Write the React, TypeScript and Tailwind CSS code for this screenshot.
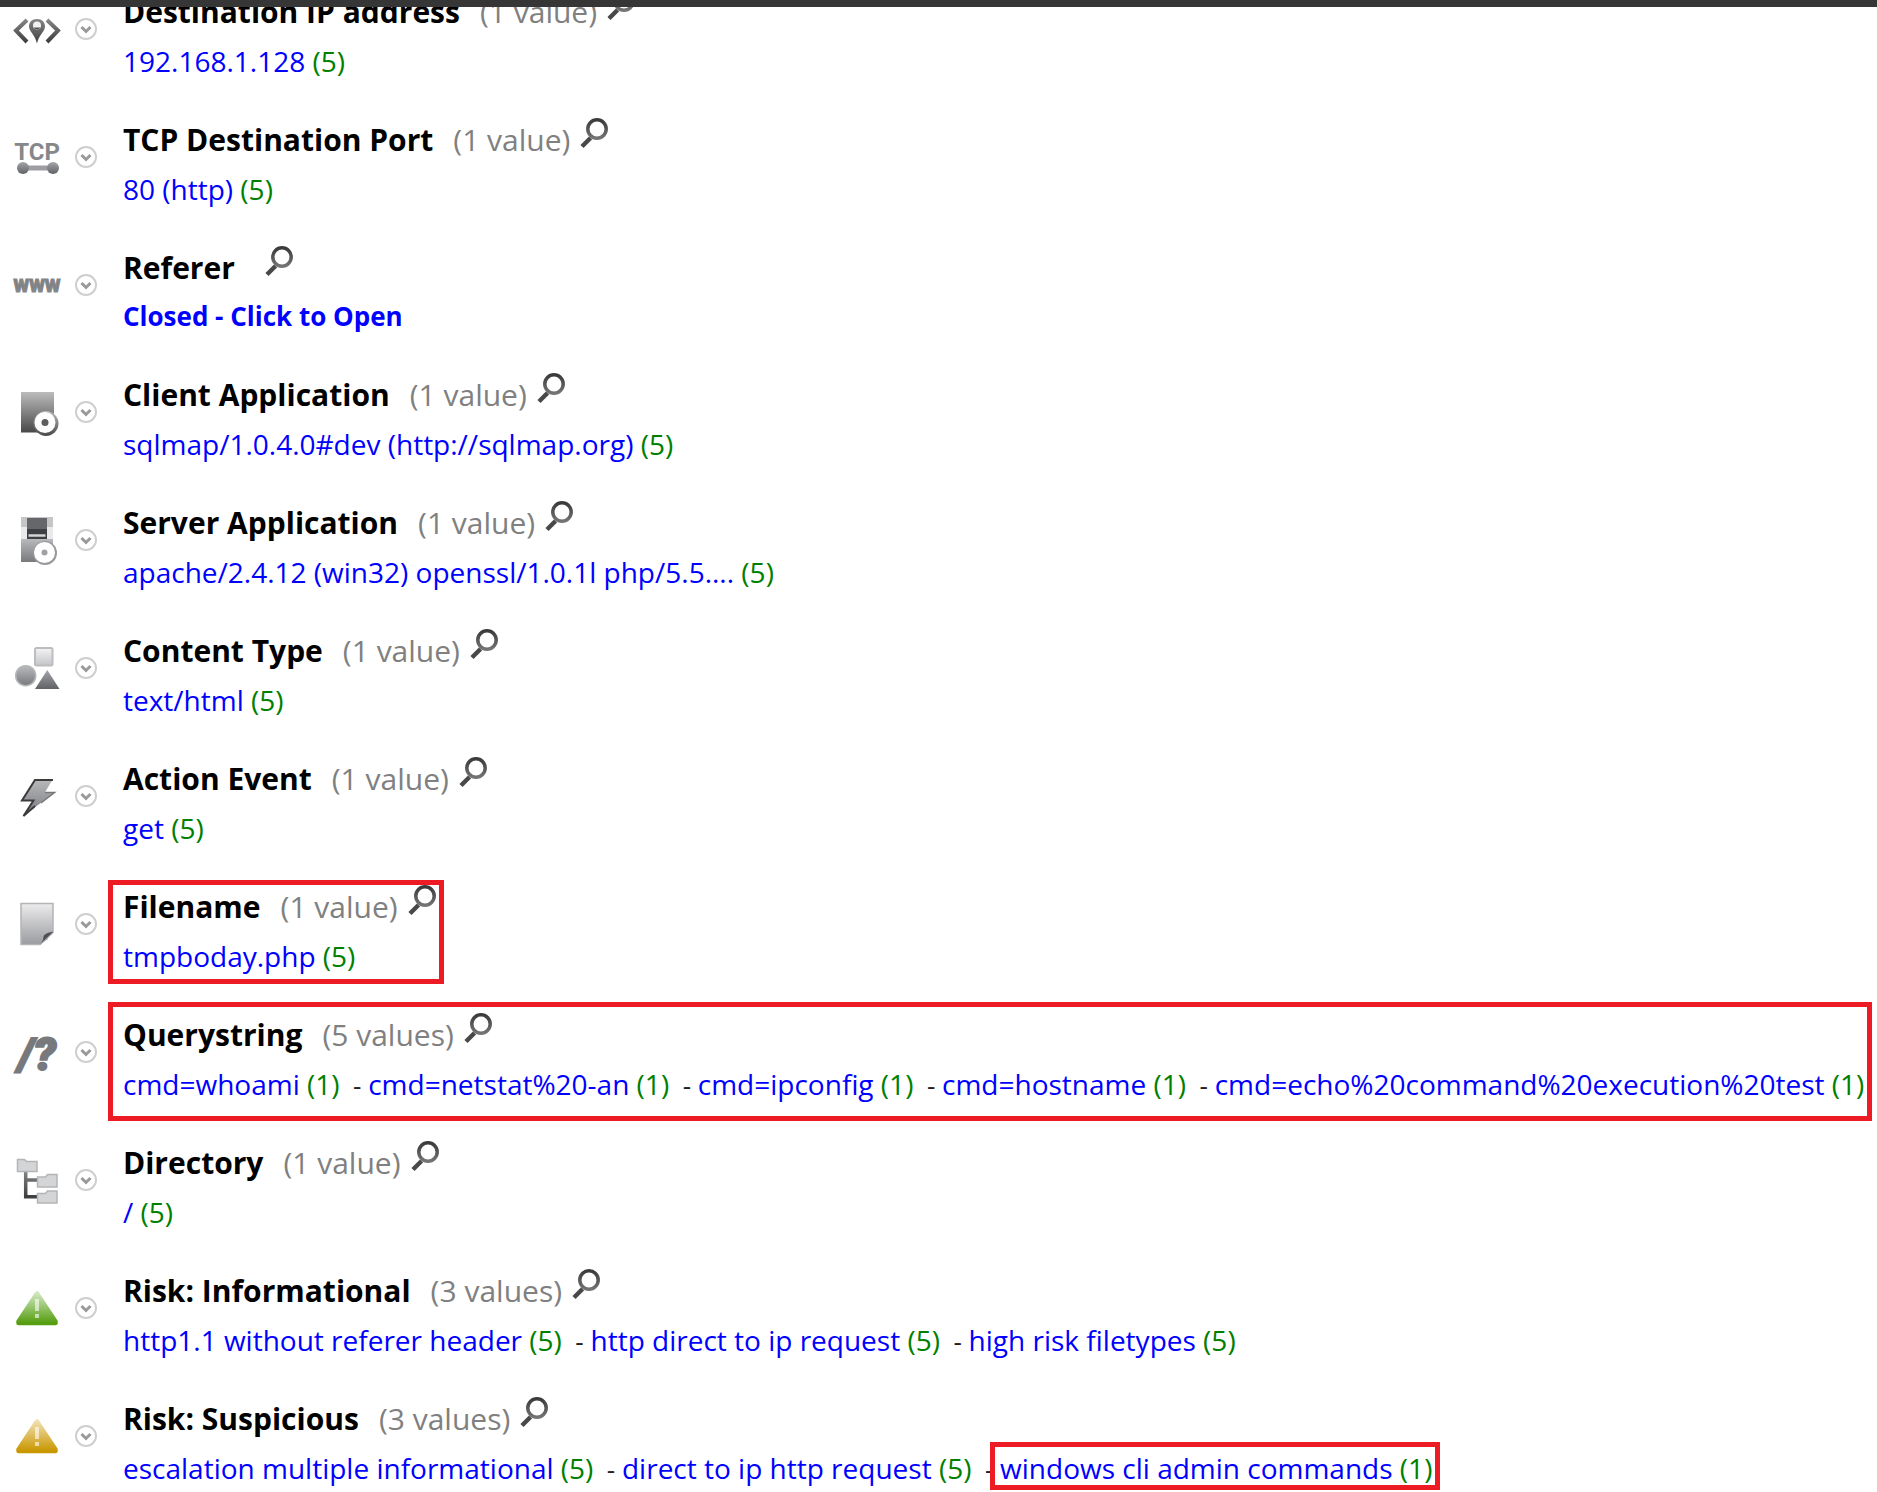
import React from 'react';

interface FieldValue {
  label: string;
  count?: number;
  marked?: boolean;
}

interface Field {
  title: string;
  total?: string;
  icon: React.ReactNode;
  values: FieldValue[];
  closed?: boolean;
  mark?: 'tight' | 'loose';
}

const IpIcon = () => (
  <svg viewBox="0 0 48 48" className="size-12">
    <path d="M14 15 3 25.500 14 37M34 15 45 25.500 34 37" fill="none" stroke="url(#ink)" strokeWidth="4" />
    <path d="M24 14c-5 0-8 3-8 7.500 0 5 6 8 8 17 2-9 8-12 8-17 0-4.500-3-7.500-8-7.500z" fill="url(#ink)" />
    <circle cx="24" cy="20.500" r="4" fill="#f1f1f1" />
    <path d="M20.500 22.500a4 4 0 0 0 7 0z" fill="#555" />
  </svg>
);

const TcpIcon = () => (
  <svg viewBox="0 0 48 48" className="size-12">
    <text x="24" y="27" textAnchor="middle" fontFamily="Roboto, sans-serif" fontWeight="700" fontSize="24" fill="#85878a">TCP</text>
    <path d="M10 35h30" stroke="#9c9ea1" strokeWidth="5" />
    <circle cx="10" cy="35" r="6" fill="url(#steel)" />
    <circle cx="40" cy="35" r="6" fill="url(#steel)" />
  </svg>
);

const WwwIcon = () => (
  <svg viewBox="0 0 48 48" className="size-12 overflow-visible">
    <text x="24" y="31" textAnchor="middle" fontFamily="Roboto, sans-serif" fontWeight="900" fontSize="18" fill="#7f8184" stroke="#85878a" strokeWidth="1">WWW</text>
  </svg>
);

const ClientIcon = () => (
  <svg viewBox="0 -1 48 48" className="size-12">
    <path d="M8 3h33v40.500H8z" fill="url(#dark)" />
    <circle cx="33" cy="34.500" r="12.500" fill="url(#dark)" />
    <circle cx="32" cy="33.500" r="10.500" fill="#fff" />
    <circle cx="32" cy="33.500" r="3.500" fill="#5e5e5e" />
  </svg>
);

const ServerIcon = () => (
  <svg viewBox="0 -1 48 48" className="size-12 overflow-visible">
    <path d="M8 0h32v10H8z" fill="#c4c5c7" />
    <path d="M8 10h32v12H8z" fill="#e9eaeb" />
    <path d="M8 22h32v23H8z" fill="url(#iron)" />
    <path d="M14 1h20v21H14z" fill="#66676b" />
    <path d="M14 12h20v10H14z" fill="#3f4043" />
    <path d="M15.500 18.500h17" stroke="#d5d5d5" strokeWidth="2.500" />
    <circle cx="32" cy="36" r="12" fill="#97999c" />
    <circle cx="31.500" cy="35.500" r="10.500" fill="#fff" />
    <circle cx="31.500" cy="35.500" r="3" fill="#a1a1a3" />
  </svg>
);

const ShapesIcon = () => (
  <svg viewBox="0 -1 48 48" className="size-12">
    <rect x="22" y="3" width="17.500" height="17.500" rx="1.500" fill="url(#snow)" stroke="#bdbdbf" strokeWidth="2" />
    <circle cx="12.700" cy="30.700" r="10" fill="url(#iron)" stroke="#b5b6b8" strokeWidth="1.500" />
    <path d="M34.300 25 46.500 44H22z" fill="url(#steel)" />
  </svg>
);

const BoltIcon = () => (
  <svg viewBox="0 -1 48 48" className="size-12">
    <path d="M21.700 6H40l-8 13.300h10L9.700 43.500 19.500 28H8z" fill="url(#iron)" />
    <path d="M40 7H22L9 27.500h11.500L10.500 43 22 33" fill="none" stroke="#3c3c3c" strokeWidth="2" />
    <path d="M32 19.500h9.500L28 30" fill="none" stroke="#777" strokeWidth="1.500" />
  </svg>
);

const FileIcon = () => (
  <svg viewBox="0 -1 48 48" className="size-12">
    <path d="M8 2.500h32v29L27 43.500H8z" fill="url(#pale)" stroke="#b3b4b7" strokeWidth="1.500" />
    <path d="M40.500 30.500c-6 1-10 3-10 5.500 0 3-2 6-4 8z" fill="#4f5053" />
    <path d="M40.500 31.500c-3 2-5 4-6 7-2 1-5 3-8 5.500z" fill="#a8a9ab" />
  </svg>
);

const QueryIcon = () => (
  <svg viewBox="0 -1 48 48" className="size-12 overflow-visible">
    <text x="24" y="41" textAnchor="middle" fontFamily="Roboto, sans-serif" fontWeight="900" fontStyle="italic" fontSize="45" fill="#77797c" stroke="#77797c" strokeWidth="2">/?</text>
  </svg>
);

const TreeIcon = () => (
  <svg viewBox="0 -1 48 48" className="size-12">
    <path d="M12.700 14v25.700H25M12.700 23H25" fill="none" stroke="url(#ink)" strokeWidth="3.500" />
    <path d="M4.500 2.500h7l2 2h10.500v10H4.500zM24.500 20h8l2-2.500h9.500V30H24.500zM24.500 36.500h8l2-2.500h9.500V46H24.500z" fill="#d3d5d7" stroke="#b4b5b7" strokeWidth="1.500" />
  </svg>
);

const RiskIcon = ({ fill }: { fill: string }) => (
  <svg viewBox="0 -1 48 48" className="size-12">
    <path d="M24 8.500 42.500 36.500v1.500H5.500v-1.500z" fill={fill} stroke={fill} strokeWidth="4.500" strokeLinejoin="round" />
    <path d="M24 14v12M24 29v4" stroke="#fff" strokeOpacity=".6" strokeWidth="4" />
  </svg>
);

const fields: Field[] = [
  { title: 'Destination IP address', total: '(1 value)', icon: <IpIcon />, values: [{ label: '192.168.1.128', count: 5 }] },
  { title: 'TCP Destination Port', total: '(1 value)', icon: <TcpIcon />, values: [{ label: '80 (http)', count: 5 }] },
  { title: 'Referer', icon: <WwwIcon />, closed: true, values: [{ label: 'Closed - Click to Open' }] },
  { title: 'Client Application', total: '(1 value)', icon: <ClientIcon />, values: [{ label: 'sqlmap/1.0.4.0#dev (http://sqlmap.org)', count: 5 }] },
  { title: 'Server Application', total: '(1 value)', icon: <ServerIcon />, values: [{ label: 'apache/2.4.12 (win32) openssl/1.0.1l php/5.5....', count: 5 }] },
  { title: 'Content Type', total: '(1 value)', icon: <ShapesIcon />, values: [{ label: 'text/html', count: 5 }] },
  { title: 'Action Event', total: '(1 value)', icon: <BoltIcon />, values: [{ label: 'get', count: 5 }] },
  { title: 'Filename', total: '(1 value)', icon: <FileIcon />, mark: 'tight', values: [{ label: 'tmpboday.php', count: 5 }] },
  {
    title: 'Querystring',
    total: '(5 values)',
    icon: <QueryIcon />,
    mark: 'loose',
    values: [
      { label: 'cmd=whoami', count: 1 },
      { label: 'cmd=netstat%20-an', count: 1 },
      { label: 'cmd=ipconfig', count: 1 },
      { label: 'cmd=hostname', count: 1 },
      { label: 'cmd=echo%20command%20execution%20test', count: 1 }
    ]
  },
  { title: 'Directory', total: '(1 value)', icon: <TreeIcon />, values: [{ label: '/', count: 5 }] },
  {
    title: 'Risk: Informational',
    total: '(3 values)',
    icon: <RiskIcon fill="url(#green)" />,
    values: [
      { label: 'http1.1 without referer header', count: 5 },
      { label: 'http direct to ip request', count: 5 },
      { label: 'high risk filetypes', count: 5 }
    ]
  },
  {
    title: 'Risk: Suspicious',
    total: '(3 values)',
    icon: <RiskIcon fill="url(#amber)" />,
    values: [
      { label: 'escalation multiple informational', count: 5 },
      { label: 'direct to ip http request', count: 5 },
      { label: 'windows cli admin commands', count: 1, marked: true }
    ]
  }
];

// Shared fills for the field icons
const gradients = [
  { id: 'ink', from: '#858585', to: '#3f3f3f' },
  { id: 'steel', from: '#a3a5a8', to: '#606266' },
  { id: 'iron', from: '#b9babc', to: '#77797d' },
  { id: 'dark', from: '#bcbcbc', to: '#484848' },
  { id: 'pale', from: '#ececed', to: '#9a9b9f' },
  { id: 'snow', from: '#f4f4f5', to: '#c3c5c8' },
  { id: 'green', from: '#cfe6bd', to: '#559e10' },
  { id: 'amber', from: '#f1deb0', to: '#c99700' },
  { id: 'lens', from: '#3a3a3a', to: '#747474' }
];

const Gradients = () => (
  <svg className="absolute size-0" aria-hidden="true">
    <defs>
      {gradients.map((g) => (
        <linearGradient key={g.id} id={g.id} x1="0" y1="0" x2="0" y2="1">
          <stop offset="0" stopColor={g.from} />
          <stop offset="1" stopColor={g.to} />
        </linearGradient>
      ))}
    </defs>
  </svg>
);

const FieldRow: React.FC<{ field: Field }> = ({ field }) => (
  <section className="flex pb-[30px] last:pb-0">
    <div className="flex h-[86px] w-28 shrink-0 items-center gap-3 pl-[13px]">
      {field.icon}
      <button aria-label={`${field.title} options`} className="size-6">
        <svg viewBox="0 0 24 24" className="size-6">
          <circle cx="13" cy="12" r="10" fill="#fff" stroke="#cfcfcf" strokeWidth="2" />
          <path d="m8.500 10 4.500 4.500 4.500-4.500" fill="none" stroke="#999" strokeWidth="3" />
        </svg>
      </button>
    </div>

    <div className="relative ml-[11px] w-fit whitespace-nowrap">
      {field.mark === 'tight' && <div className="pointer-events-none absolute -top-px -right-2 -bottom-[5px] -left-[15px] border-5 border-[#ed1c24]" />}
      {field.mark === 'loose' && <div className="pointer-events-none absolute -top-[7px] -right-2 -bottom-3.5 -left-[15px] border-5 border-[#ed1c24]" />}
      <div className="flex h-[52px] text-[30px] leading-[52px]">
        <h2 className="font-bold text-black">{field.title}</h2>
        <span className="ml-5 text-[#808080]">{field.total}</span>
        <button aria-label={`Search ${field.title}`} className="mt-1 ml-2.5 h-8 w-7">
          <svg viewBox="0 0 28 32" className="h-8 w-7">
            <circle cx="17" cy="11" r="9.200" fill="#fff" stroke="url(#lens)" strokeWidth="3.500" />
            <path d="M10.500 20 2 28.500" fill="none" stroke="#484848" strokeWidth="4.500" />
          </svg>
        </button>
      </div>
      <div className={field.closed ? 'text-[26px] leading-[45px] font-bold' : 'text-[28px] leading-[46px]'}>
        {field.values.map((value, idx) => (
          <React.Fragment key={value.label}>
            {idx > 0 && <span className="text-[26px] leading-none text-[#222]">&nbsp; - </span>}
            <span className="relative">
              {value.marked && <span className="pointer-events-none absolute -top-[7px] -right-2 -bottom-[3px] -left-2.5 border-5 border-[#ed1c24]" />}
              <a href="#" className="text-[#0000ff]">{value.label}</a>
              {value.count && <span className="text-[#008000]"> ({value.count})</span>}
            </span>
          </React.Fragment>
        ))}
      </div>
    </div>
  </section>
);

export default function App() {
  return (
    <main className="overflow-hidden bg-white font-['Open_Sans',sans-serif]">
      <Gradients />
      <div className="relative z-10 h-[7px] bg-[#363636]" />
      <div className="-mt-[21px]">
        {fields.map((field) => (
          <FieldRow key={field.title} field={field} />
        ))}
      </div>
    </main>
  );
}
